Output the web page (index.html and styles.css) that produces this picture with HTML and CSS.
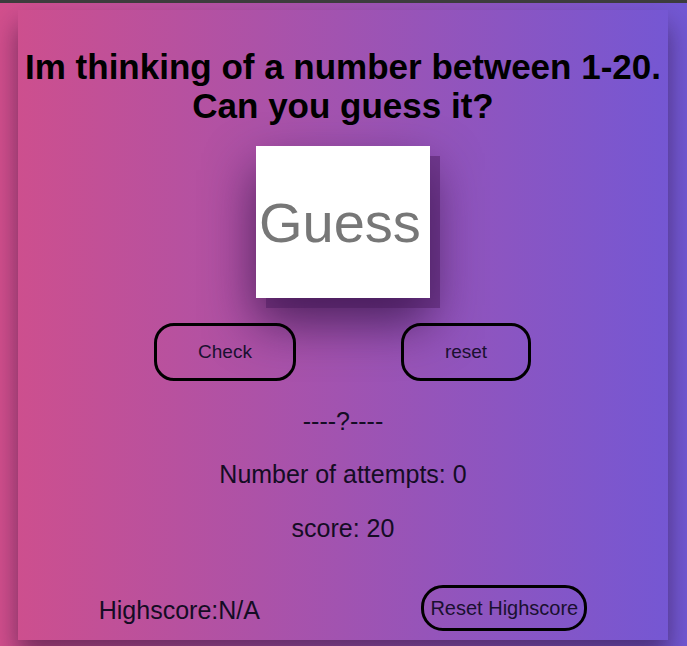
FILE: index.html
```html
<!DOCTYPE html>
<html lang="en">
<head>
<meta charset="utf-8">
<title>Guess the number</title>
<link rel="stylesheet" href="styles.css">
</head>
<body>
<main class="card">
  <h1 class="title">Im thinking of a number between 1-20.<br>Can you guess it?</h1>
  <div class="guess-wrap">
    <input class="guess" type="text" placeholder="Guess">
  </div>
  <div class="actions">
    <button class="btn btn-check">Check</button>
    <button class="btn btn-reset">reset</button>
  </div>
  <p class="info hint">----?----</p>
  <p class="info attempts">Number of attempts: 0</p>
  <p class="info score">score: 20</p>
  <div class="bottom">
    <span class="highscore">Highscore:N/A</span>
    <button class="btn btn-hs">Reset Highscore</button>
  </div>
</main>
</body>
</html>
```
FILE: styles.css
```css
html {
  background: linear-gradient(to right, #d24f8d, #7258d4);
  min-height: 100%;
}
body {
  margin: 0;
  border-top: 3px solid #3c3c3c;
  font-family: "Liberation Sans", Arial, sans-serif;
  color: #140c24;
  height: 643px;
  overflow: hidden;
}
.card {
  box-sizing: border-box;
  width: 650px;
  height: 630px;
  margin: 7px 0 0 18px;
  padding: 37px 0 9px;
  background: linear-gradient(to right, #cd4f8e, #7557d3);
  box-shadow: 0 16px 24px rgba(30, 10, 40, 0.5);
  display: flex;
  flex-direction: column;
  align-items: center;
}
.title {
  margin: 0;
  font-size: 35px;
  line-height: 39px;
  font-weight: bold;
  text-align: center;
  color: #000;
}
.guess-wrap {
  margin-top: 21px;
}
.guess {
  display: block;
  box-sizing: border-box;
  width: 174px;
  height: 152px;
  border: none;
  padding: 0 0 0 3px;
  background: #fff;
  font-family: "Liberation Sans", Arial, sans-serif;
  font-size: 56px;
  color: #777;
  outline: none;
  box-shadow: 10px 10px 0 rgba(70, 25, 90, 0.45), 0 24px 50px rgba(35, 10, 55, 0.7);
}
.guess::placeholder {
  color: #777;
}
.actions {
  margin-top: 25px;
  display: flex;
  gap: 105px;
  margin-right: 1px;
}
.btn {
  box-sizing: border-box;
  background: transparent;
  border: 3px solid #000;
  border-radius: 20px;
  font-family: "Liberation Sans", Arial, sans-serif;
  color: #1a1030;
  cursor: pointer;
}
.btn-check,
.btn-reset {
  height: 58px;
  padding: 0 40px;
  font-size: 19px;
}
.btn-check {
  width: 142px;
}
.btn-reset {
  width: 130px;
}
.info {
  margin: 0;
  font-size: 25px;
  line-height: 28px;
  text-align: center;
}
.hint {
  margin-top: 26px;
}
.attempts {
  margin-top: 25px;
}
.score {
  margin-top: 26px;
}
.bottom {
  margin-top: auto;
  width: 100%;
  display: flex;
  justify-content: space-around;
  align-items: center;
}
.highscore {
  font-size: 25px;
  line-height: 28px;
  padding-top: 3px;
}
.btn-hs {
  height: 46px;
  padding: 0 6px;
  font-size: 20px;
  border-radius: 22px;
}
```
